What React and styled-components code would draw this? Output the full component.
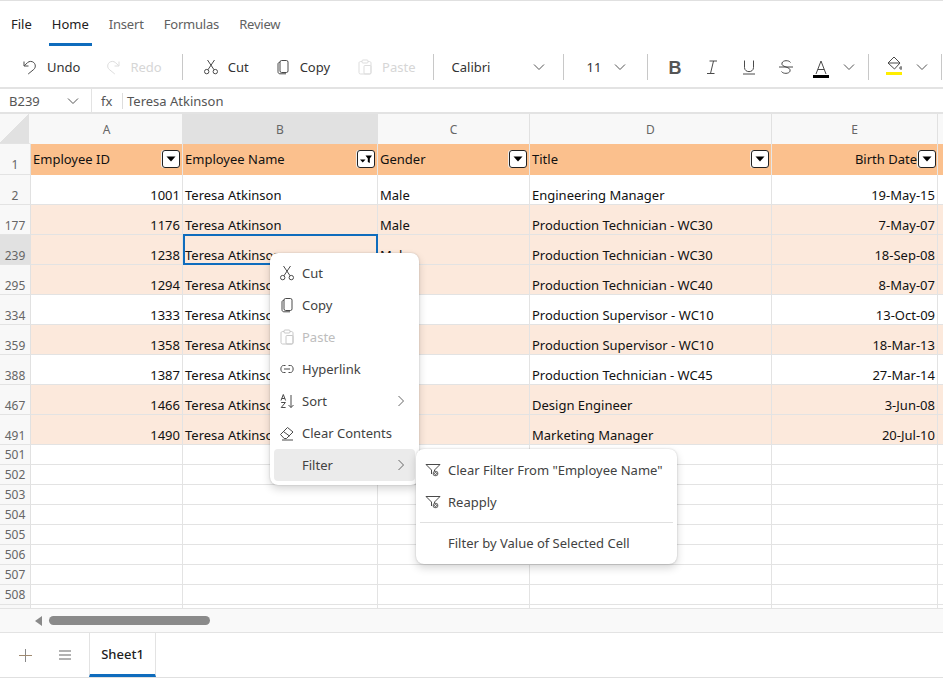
import styled, { createGlobalStyle } from "styled-components";

// the last column only peeks in at the right edge, its letter is off the page
const COLUMNS = [
    { name: "A", width: 152 },
    { name: "B", width: 195, selected: true },
    { name: "C", width: 152 },
    { name: "D", width: 242 },
    { name: "E", width: 166 },
    { name: "", width: 40 },
];

const ROWS = [
    { num: 2, id: 1001, gender: "Male", title: "Engineering Manager", date: "19-May-15" },
    { num: 177, id: 1176, gender: "Male", title: "Production Technician - WC30", date: "7-May-07", tint: true },
    { num: 239, id: 1238, gender: "Male", title: "Production Technician - WC30", date: "18-Sep-08", tint: true, active: true },
    { num: 295, id: 1294, gender: "Male", title: "Production Technician - WC40", date: "8-May-07", tint: true },
    { num: 334, id: 1333, gender: "Male", title: "Production Supervisor - WC10", date: "13-Oct-09" },
    { num: 359, id: 1358, gender: "Male", title: "Production Supervisor - WC10", date: "18-Mar-13", tint: true },
    { num: 388, id: 1387, gender: "Male", title: "Production Technician - WC45", date: "27-Mar-14" },
    { num: 467, id: 1466, gender: "Male", title: "Design Engineer", date: "3-Jun-08", tint: true },
    { num: 491, id: 1490, gender: "Male", title: "Marketing Manager", date: "20-Jul-10", tint: true },
];

// the last one is only a sliver above the scroll strip, so it has no number
const EMPTY_ROWS = [501, 502, 503, 504, 505, 506, 507, 508, ""];

const Svg = ({ size = 16, children, color = "#4a4a4a" }) => (
    <svg width={size} height={size} viewBox="0 0 16 16" fill="none" stroke={color} strokeWidth="1" style={{ flexShrink: 0 }}>
        {children}
    </svg>
);

const Undo = ({ color }) => (
    <Svg color={color}>
        <path d="M2 2.5V7H6.5M2.3 6.8 5.5 3.6C7.3 2 10 2 11.8 3.6 13.8 5.5 13.8 8.5 11.8 10.4L6.2 15" />
    </Svg>
);

const Redo = ({ color }) => (
    <Svg color={color}>
        <path d="M14 2.5V7H9.5M13.7 6.8 10.5 3.6C8.7 2 6 2 4.2 3.6 2.2 5.5 2.2 8.5 4.2 10.4L9.8 15" />
    </Svg>
);

const Scissors = () => (
    <Svg>
        <circle cx="3.7" cy="12.6" r="2.2" />
        <circle cx="12.3" cy="12.6" r="2.2" />
        <path d="M4.9 10.8 11.5 1M11.1 10.8 4.5 1" />
    </Svg>
);

const CopyIcon = () => (
    <Svg>
        <rect x="5" y="1.5" width="8" height="12" rx="1.6" />
        <path d="M5 3.2C3.6 3.4 3 4 3 5V12.8C3 14 3.8 14.8 5 14.8H11" />
    </Svg>
);

const PasteIcon = ({ color = "#ddd" }) => (
    <Svg color={color}>
        <path d="M5 2.5H3.6C2.7 2.5 2 3.2 2 4V13.4C2 14.3 2.7 15 3.6 15H12.4C13.3 15 14 14.3 14 13.4V4C14 3.2 13.3 2.5 12.4 2.5H11" />
        <rect x="5" y="1" width="6" height="3" rx="1" />
        <rect x="7" y="6.5" width="7" height="8.5" rx="1" />
    </Svg>
);

const LinkIcon = () => (
    <Svg>
        <path d="M6.5 4.5H4.5C1 4.5 1 11.5 4.5 11.5H6.5M9.5 4.5H11.5C15 4.5 15 11.5 11.5 11.5H9.5M5 8H11" />
    </Svg>
);

const SortIcon = () => (
    <Svg>
        <path d="M12 2V14.5M9.5 12 12 14.5 14.5 12" />
        <path d="M2 7.5 4.3 1.5 6.6 7.5M2.8 5.5H5.8M2.2 9.5H6.4L2.2 14.5H6.6" />
    </Svg>
);

const EraserIcon = () => (
    <Svg>
        <path d="M1.5 9.5 8.5 2.5 14 7 7.5 13.5H5.2ZM4.5 6.6 10.5 11M3 15H14" />
    </Svg>
);

const FilterClearIcon = () => (
    <Svg>
        <path d="M1 2.5H15L9.5 8V10M1 2.5 6.5 8V12" />
        <circle cx="10.5" cy="11.5" r="2.8" fill="#777" stroke="none" />
        <path d="M9.4 10.4 11.6 12.6M11.6 10.4 9.4 12.6" stroke="#fff" />
    </Svg>
);

const Chevron = ({ size = 12 }) => (
    <svg width={size} height={size} viewBox="0 0 12 12" fill="none" stroke="#555" strokeWidth="1" style={{ flexShrink: 0 }}>
        <path d="M1 3.5 6 8.5 11 3.5" />
    </svg>
);

const ChevronRight = () => (
    <svg width="8" height="12" viewBox="0 0 8 12" fill="none" stroke="#666" strokeWidth="1">
        <path d="M1.5 1 6.5 6 1.5 11" />
    </svg>
);

const FilterButton = ({ filtered }) => (
    <FilterBox>
        <svg width="14" height="10" viewBox="0 0 14 10" fill="#000">
            {filtered ? (
                <>
                    <path d="M1 5.5H6.5L3.75 8.5Z" />
                    <path d="M6.5 1.5H13L10.8 4.5V9L8.8 8V4.5Z" />
                </>
            ) : (
                <path d="M2.5 2.5H11.5L7 7.5Z" />
            )}
        </svg>
    </FilterBox>
);

export default function App() {
    return (
        <>
            <GlobalStyle />
            <Page>
                <TabBar>
                    <TabItem $dark>File</TabItem>
                    <TabItem $active>Home</TabItem>
                    <TabItem>Insert</TabItem>
                    <TabItem>Formulas</TabItem>
                    <TabItem>Review</TabItem>
                </TabBar>

                <Toolbar>
                    <ToolButton>
                        <Undo />
                        Undo
                    </ToolButton>
                    <ToolButton $disabled>
                        <Redo color="#ddd" />
                        Redo
                    </ToolButton>
                    <Divider $left={3} $right={12} />
                    <ToolButton $space={10}>
                        <Scissors />
                        Cut
                    </ToolButton>
                    <ToolButton $space={11}>
                        <CopyIcon />
                        Copy
                    </ToolButton>
                    <ToolButton $disabled>
                        <PasteIcon />
                        Paste
                    </ToolButton>
                    <Divider $left={0} $right={10} />
                    <SelectBox $width={93} $left={8} $right={15}>
                        Calibri
                        <Chevron />
                    </SelectBox>
                    <Divider $left={3} $right={10} />
                    <SelectBox $width={39} $left={13} $right={18}>
                        11
                        <Chevron />
                    </SelectBox>
                    <Divider $left={3} $right={9} />
                    <IconButton>
                        <BoldGlyph>B</BoldGlyph>
                    </IconButton>
                    <IconButton>
                        <Svg>
                            <path d="M5.5 2H13M3 14.5H10.5M9.5 2 6.5 14.5" />
                        </Svg>
                    </IconButton>
                    <IconButton>
                        <Svg>
                            <path d="M3.5 1.5V8.5C3.5 14 12.5 14 12.5 8.5V1.5" />
                            <path d="M2 15H14" />
                        </Svg>
                    </IconButton>
                    <IconButton>
                        <Svg>
                            <path d="M12.5 3.5C11 1 5 1 4 4 3.4 6 5 7 8 8 11 9 12.6 10 12 12.2 11 15 5 15 3.5 12.5" />
                            <path d="M1 8H15" />
                        </Svg>
                    </IconButton>
                    <ColorButton $bar="#000" $left={8} $down>
                        <Svg size={16}>
                            <path d="M3 15 8 2 13 15M4.8 10.5H11.2" />
                        </Svg>
                    </ColorButton>
                    <Chevron />
                    <Divider $left={13} $right={17} />
                    <ColorButton $bar="#ffee00" $left={0}>
                        <Svg size={16}>
                            <path d="M8 1 14 7 8.5 13 2 7ZM2 7H14" />
                            <circle cx="15" cy="12" r="1.2" />
                        </Svg>
                    </ColorButton>
                    <Chevron />
                    <Divider $left={13} $right={0} />
                </Toolbar>

                <FormulaBar>
                    <NameBox>
                        B239
                        <Chevron />
                    </NameBox>
                    <FxLabel>fx</FxLabel>
                    <FormulaValue>Teresa Atkinson</FormulaValue>
                </FormulaBar>

                <Sheet>
                    <HeaderRow>
                        <Corner />
                        {COLUMNS.map((col) => (
                            <ColumnHead key={col.width + col.name} $width={col.width} $selected={col.selected}>
                                {col.name}
                            </ColumnHead>
                        ))}
                    </HeaderRow>

                    <TitleRow>
                        <RowHead $line={18}>1</RowHead>
                        <TitleCell $width={152}>
                            Employee ID
                            <FilterButton />
                        </TitleCell>
                        <TitleCell $width={195}>
                            Employee Name
                            <FilterButton filtered />
                        </TitleCell>
                        <TitleCell $width={152}>
                            Gender
                            <FilterButton />
                        </TitleCell>
                        <TitleCell $width={242}>
                            Title
                            <FilterButton />
                        </TitleCell>
                        <TitleCell $width={166} $right>
                            Birth Date
                            <FilterButton />
                        </TitleCell>
                        <TitleCell $width={40} />
                    </TitleRow>

                    {ROWS.map((row) => (
                        <DataRow key={row.num} $tint={row.tint}>
                            <RowHead $active={row.active} $line={16}>
                                {row.num}
                            </RowHead>
                            <Cell $width={152} $right>
                                {row.id}
                            </Cell>
                            <Cell $width={195} $focused={row.active}>
                                Teresa Atkinson
                            </Cell>
                            <Cell $width={152}>{row.gender}</Cell>
                            <Cell $width={242}>{row.title}</Cell>
                            <Cell $width={166} $right>
                                {row.date}
                            </Cell>
                            <Cell $width={40} />
                        </DataRow>
                    ))}

                    {EMPTY_ROWS.map((num, i) => (
                        <EmptyRow key={i}>
                            <RowHead $center>{num}</RowHead>
                            {COLUMNS.map((col) => (
                                <Cell key={col.width + col.name} $width={col.width} />
                            ))}
                        </EmptyRow>
                    ))}
                </Sheet>

                <ScrollStrip>
                    <ScrollArrow />
                    <ScrollThumb />
                </ScrollStrip>

                <SheetBar>
                    <SheetAction $left={19}>
                        <svg width="13" height="13" viewBox="0 0 13 13" fill="none" strokeWidth="1">
                            <path d="M6.5 0V13" stroke="#888" />
                            <path d="M0 6.5H13" stroke="#a08a70" />
                        </svg>
                    </SheetAction>
                    <SheetAction $left={27}>
                        <svg width="12" height="10" viewBox="0 0 12 10" fill="none" stroke="#666" strokeWidth="1.2">
                            <path d="M0 1H12M0 5H12M0 9H12" />
                        </svg>
                    </SheetAction>
                    <SheetTab>Sheet1</SheetTab>
                </SheetBar>

                <ContextMenu>
                    <MenuItem>
                        <MenuIcon><Scissors /></MenuIcon>
                        Cut
                    </MenuItem>
                    <MenuItem>
                        <MenuIcon><CopyIcon /></MenuIcon>
                        Copy
                    </MenuItem>
                    <MenuItem $disabled>
                        <MenuIcon><PasteIcon color="#c8c8c8" /></MenuIcon>
                        Paste
                    </MenuItem>
                    <MenuItem>
                        <MenuIcon><LinkIcon /></MenuIcon>
                        Hyperlink
                    </MenuItem>
                    <MenuItem>
                        <MenuIcon><SortIcon /></MenuIcon>
                        Sort
                        <MenuArrow><ChevronRight /></MenuArrow>
                    </MenuItem>
                    <MenuItem>
                        <MenuIcon><EraserIcon /></MenuIcon>
                        Clear Contents
                    </MenuItem>
                    <MenuItem $hover>
                        <MenuIcon />
                        Filter
                        <MenuArrow><ChevronRight /></MenuArrow>
                    </MenuItem>
                </ContextMenu>

                <SubMenu>
                    <SubItem>
                        <SubIcon><FilterClearIcon /></SubIcon>
                        Clear Filter From "Employee Name"
                    </SubItem>
                    <SubItem>
                        <SubIcon><FilterClearIcon /></SubIcon>
                        Reapply
                    </SubItem>
                    <MenuLine />
                    <SubItem>
                        <SubIcon />
                        Filter by Value of Selected Cell
                    </SubItem>
                </SubMenu>
            </Page>
        </>
    );
}

const GlobalStyle = createGlobalStyle`
    html, body {
        margin: 0;
        padding: 0;
        background: #fff;
    }

    * {
        box-sizing: border-box;
    }
`;

const Page = styled.div`
    position: relative;
    width: 943px;
    height: 678px;
    overflow: hidden;
    display: flex;
    flex-direction: column;
    border-top: 1px solid #e0e0e0;
    border-bottom: 1px solid #e0e0e0;
    font-family: "Noto Sans", "Open Sans", sans-serif;
    font-size: 13px;
    color: #212121;
`;

const TabBar = styled.div`
    display: flex;
    height: 45px;
    flex-shrink: 0;
    padding-left: 8px;
`;

const TabItem = styled.div`
    position: relative;
    display: flex;
    align-items: center;
    padding: 0 3px;
    margin-right: 14px;
    font-size: 13px;
    letter-spacing: ${(p) => (p.$dark || p.$active ? "0" : "-0.2px")};
    color: ${(p) => (p.$dark || p.$active ? "#212121" : "#616161")};

    ${(p) =>
        p.$active &&
        `
        &::after {
            content: '';
            position: absolute;
            left: 0;
            right: 0;
            bottom: 0;
            height: 3px;
            background: #0f6cbd;
        }
    `}
`;

const Toolbar = styled.div`
    display: flex;
    align-items: center;
    height: 43px;
    flex-shrink: 0;
    padding-left: 14px;
    border-bottom: 2px solid #e3e3e3;
    white-space: nowrap;
`;

const ToolButton = styled.div`
    display: flex;
    align-items: center;
    flex-shrink: 0;
    gap: 9px;
    padding: 0 8px;
    margin-right: ${(p) => p.$space ?? 9}px;
    font-size: 13px;
    color: ${(p) => (p.$disabled ? "#d6d6d6" : "#333")};
`;

const Divider = styled.div`
    width: 1px;
    height: 26px;
    background: #c8c8c8;
    margin-left: ${(p) => p.$left}px;
    margin-right: ${(p) => p.$right}px;
    flex-shrink: 0;
`;

const SelectBox = styled.div`
    display: flex;
    align-items: center;
    justify-content: space-between;
    flex-shrink: 0;
    width: ${(p) => p.$width}px;
    margin-left: ${(p) => p.$left}px;
    margin-right: ${(p) => p.$right}px;
    font-size: 13px;
    color: #333;
`;

const IconButton = styled.div`
    display: flex;
    align-items: center;
    justify-content: center;
    flex-shrink: 0;
    width: 16px;
    margin: 0 10.5px;
`;

const BoldGlyph = styled.span`
    display: block;
    margin-top: 4px;
    font-family: "Liberation Sans", sans-serif;
    font-weight: 700;
    font-size: 18px;
    color: #555;
`;

const ColorButton = styled.div`
    display: flex;
    flex-direction: column;
    align-items: center;
    flex-shrink: 0;
    width: 16px;
    margin-left: ${(p) => p.$left}px;
    margin-right: 14px;
    margin-top: ${(p) => (p.$down ? "4px" : "0")};
    margin-bottom: ${(p) => (p.$down ? "0" : "2px")};

    &::after {
        content: '';
        display: block;
        width: 16px;
        height: 3px;
        background: ${(p) => p.$bar};
    }
`;

const FormulaBar = styled.div`
    display: flex;
    align-items: center;
    height: 25px;
    flex-shrink: 0;
    border-bottom: 2px solid #e3e3e3;
    font-size: 13px;
    color: #555;
`;

const NameBox = styled.div`
    display: flex;
    align-items: center;
    justify-content: space-between;
    width: 92px;
    height: 100%;
    padding: 0 12px 0 9px;
    border-right: 1px solid #e3e3e3;
`;

const FxLabel = styled.div`
    width: 30px;
    padding-left: 9px;
    font-size: 13px;
    color: #555;
`;

const FormulaValue = styled.div`
    padding-left: 4px;
    line-height: 16px;
    border-left: 1px solid #ddd;
    color: #555;
`;

const Sheet = styled.div`
    flex: 1;
    min-height: 0;
    overflow: hidden;
`;

const HeaderRow = styled.div`
    display: flex;
    height: 30px;
`;

const Corner = styled.div`
    width: 31px;
    flex-shrink: 0;
    background: linear-gradient(135deg, #f8f8f8 50%, #e1e1e1 50%);
    border-right: 2px solid #f8f8f8;
    border-bottom: 1px solid #e3e3e3;
    background-clip: padding-box;
`;

const ColumnHead = styled.div`
    display: flex;
    align-items: center;
    justify-content: center;
    width: ${(p) => p.$width}px;
    flex-shrink: 0;
    background: ${(p) => (p.$selected ? "#e1e1e1" : "#f8f8f8")};
    border-right: 1px solid #e1e1e1;
    font-size: 12px;
    color: #666;
`;

const RowHead = styled.div`
    display: flex;
    align-items: ${(p) => (p.$center ? "center" : "flex-end")};
    justify-content: center;
    width: 31px;
    flex-shrink: 0;
    background: ${(p) => (p.$active ? "#e1e1e1" : "#f8f8f8")};
    border-right: 1px solid #e1e1e1;
    border-bottom: 1px solid #e3e3e3;
    font-size: 12px;
    line-height: ${(p) => p.$line ?? 20}px;
    color: #666;
`;

const TitleRow = styled.div`
    display: flex;
    height: 31px;
    background: #fbc08d;
`;

const TitleCell = styled.div`
    display: flex;
    align-items: center;
    justify-content: ${(p) => (p.$right ? "flex-end" : "space-between")};
    gap: 1px;
    width: ${(p) => p.$width}px;
    flex-shrink: 0;
    padding: 0 ${(p) => (p.$right ? "1px" : "2px")} 1px 2px;
    border-right: 1px solid #e6e6e6;
    color: #111;
`;

const FilterBox = styled.div`
    display: flex;
    align-items: center;
    justify-content: center;
    width: 18px;
    height: 18px;
    background: #fff;
    border: 1px solid #222;
    border-radius: 3px;
    box-shadow: -1px 0 0 #eee;
`;

const DataRow = styled.div`
    display: flex;
    height: 30px;
    background: ${(p) => (p.$tint ? "#fce9dc" : "#fff")};
`;

const EmptyRow = styled.div`
    display: flex;
    height: 20px;
`;

const Cell = styled.div`
    position: relative;
    display: flex;
    align-items: flex-end;
    justify-content: ${(p) => (p.$right ? "flex-end" : "flex-start")};
    width: ${(p) => p.$width}px;
    flex-shrink: 0;
    padding: 0 2px;
    border-right: 1px solid #e3e3e3;
    border-bottom: 1px solid #e3e3e3;
    line-height: 18px;
    color: #111;
    white-space: nowrap;

    ${(p) =>
        p.$focused &&
        `
        &::after {
            content: '';
            position: absolute;
            left: 0;
            right: -1px;
            top: -1px;
            bottom: -1px;
            border: 2px solid #0f6cbd;
        }
    `}
`;

const ScrollStrip = styled.div`
    display: flex;
    align-items: center;
    height: 25px;
    flex-shrink: 0;
    padding-left: 35px;
    background: #f9f9f9;
    border-top: 1px solid #e3e3e3;
    border-bottom: 1px solid #e3e3e3;
`;

const ScrollArrow = styled.div`
    width: 0;
    height: 0;
    border-top: 5px solid transparent;
    border-bottom: 5px solid transparent;
    border-right: 7px solid #8a8a8a;
`;

const ScrollThumb = styled.div`
    width: 161px;
    height: 9px;
    margin-left: 7px;
    border-radius: 5px;
    background: #8a8a8a;
`;

const SheetBar = styled.div`
    display: flex;
    align-items: center;
    height: 44px;
    flex-shrink: 0;
`;

const SheetAction = styled.div`
    display: flex;
    margin-left: ${(p) => p.$left}px;
`;

const SheetTab = styled.div`
    display: flex;
    align-items: center;
    justify-content: center;
    width: 67px;
    height: 100%;
    margin-left: 18px;
    border-left: 1px solid #e3e3e3;
    border-right: 1px solid #e3e3e3;
    border-bottom: 3px solid #0f6cbd;
    font-size: 13px;
    font-weight: 500;
    color: #212121;
`;

const ContextMenu = styled.div`
    position: absolute;
    left: 270px;
    top: 252px;
    width: 149px;
    padding: 4px;
    background: #fff;
    border-radius: 8px;
    box-shadow: 0 0 2px rgba(0, 0, 0, 0.2), 0 4px 8px rgba(0, 0, 0, 0.16);
`;

const MenuItem = styled.div`
    display: flex;
    align-items: center;
    height: 32px;
    border-radius: 4px;
    background: ${(p) => (p.$hover ? "#ebebeb" : "transparent")};
    font-size: 13px;
    color: ${(p) => (p.$disabled ? "#bdbdbd" : "#424242")};
`;

const MenuIcon = styled.div`
    display: flex;
    justify-content: center;
    width: 28px;
    padding-right: 2px;
`;

const MenuArrow = styled.div`
    display: flex;
    margin-left: auto;
    margin-right: 10px;
`;

const SubMenu = styled.div`
    position: absolute;
    left: 416px;
    top: 448px;
    width: 261px;
    padding: 5px 4px 5px;
    background: #fff;
    border-radius: 8px;
    box-shadow: 0 0 2px rgba(0, 0, 0, 0.2), 0 4px 8px rgba(0, 0, 0, 0.16);
`;

const SubItem = styled.div`
    display: flex;
    align-items: center;
    height: 32px;
    font-size: 13px;
    color: #424242;
    white-space: nowrap;
`;

const SubIcon = styled.div`
    display: flex;
    width: 28px;
    padding-left: 5px;
    flex-shrink: 0;
`;

const MenuLine = styled.div`
    height: 1px;
    margin: 4px 0 4px;
    background: #e0e0e0;
`;
